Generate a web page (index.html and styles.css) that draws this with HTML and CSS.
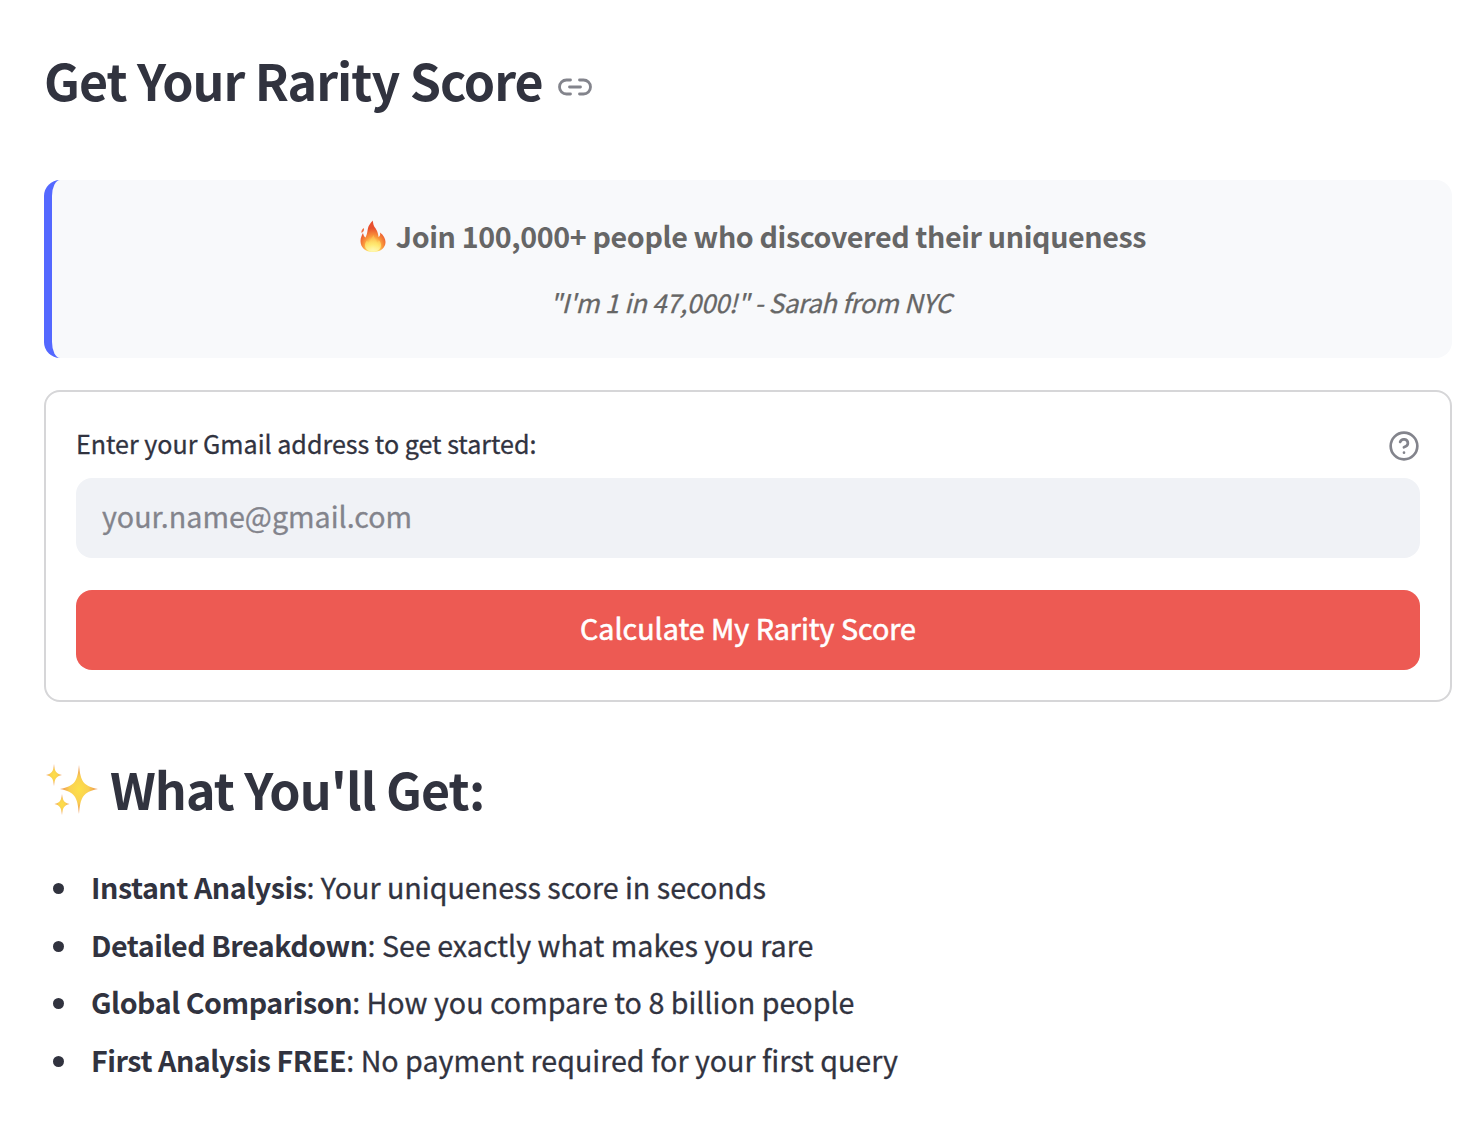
FILE: index.html
```html
<!DOCTYPE html>
<html lang="en">
<head>
  <meta charset="UTF-8" />
  <meta name="viewport" content="width=device-width, initial-scale=1.0" />
  <title>Get Your Rarity Score</title>
  <link rel="stylesheet" href="styles.css">
</head>
<body>
  <main class="container">
    <h1 class="page-title">
      <span>Get Your Rarity Score</span>
      <svg class="link-icon" viewBox="0 0 34 18" fill="none" stroke="currentColor" stroke-width="2.800" stroke-linecap="round">
        <path d="M12.500 2H8.500a7 7 0 0 0 0 14h4M21.500 2h4a7 7 0 0 1 0 14h-4M11.500 9h11" />
      </svg>
    </h1>

    <div class="social-proof">
      <p class="headline">
        <svg class="fire" viewBox="0 0 26 32">
          <defs>
            <radialGradient id="flame" cx="50%" cy="88%" r="75%">
              <stop offset="0" stop-color="#fffbb0" />
              <stop offset="0.28" stop-color="#ffe568" />
              <stop offset="0.5" stop-color="#fb9a3c" />
              <stop offset="0.85" stop-color="#e8502f" />
            </radialGradient>
            <linearGradient id="core" x1="0" y1="0" x2="0" y2="1">
              <stop offset="0" stop-color="#fcb04a" />
              <stop offset="0.6" stop-color="#ffe96e" />
              <stop offset="1" stop-color="#fffbc0" />
            </linearGradient>
          </defs>
          <path fill="url(#flame)" d="M13 32C5.500 32 .5 27.500.5 21c0-3.500 1.500-6 2.500-8 .5 2 1 3.500 2.500 4.500C8 13 7 9 9 5.500 10.200 3.200 12 1.800 12.500.5c.8 1.500.5 3.500 1.500 5.500 1.200 2.500 4 4.500 4.500 11 1.500-.8 2-2.500 1.500-4.500 3.500 2.500 5.500 6 5.500 9.500 0 6-5 10-12.500 10z" />
          <path fill="#ee7147" d="M3.800 8c.8 2-.4 4-2.200 5-.6-2 .4-4 2.200-5z" />
          <path fill="url(#core)" opacity=".75" d="M13 31.500c-5 0-8-2.500-8-6.500 0-2 1-3 2-4.500.8 1.500 1.500 2 2.500 2.500C10 20 12 18 13.500 15c1 3 2.500 5 3 8 1.200-.5 2-1.500 2.300-3 1.500 2 2.200 3.200 2.200 5 0 4-3 6.500-8 6.500z" />
        </svg>
        <strong>Join 100,000+ people who discovered their uniqueness</strong>
      </p>
      <p class="quote"><em>"I'm 1 in 47,000!" - Sarah from NYC</em></p>
    </div>

    <form class="rarity-form">
      <div class="label-row">
        <label for="email">Enter your Gmail address to get started:</label>
        <svg class="help-icon" viewBox="0 0 24 24" fill="none" stroke="currentColor" stroke-width="2" stroke-linecap="round" stroke-linejoin="round">
          <circle cx="12" cy="12" r="10" />
          <path d="M9.090 9a3 3 0 0 1 5.830 1c0 2-3 3-3 3" />
          <path d="M12 17h.01" />
        </svg>
      </div>
      <input type="text" id="email" placeholder="your.name@gmail.com" />
      <button type="button">Calculate My Rarity Score</button>
    </form>

    <h2 class="section-title">
      <svg class="sparkles" viewBox="0 0 54 54">
        <defs>
          <radialGradient id="spark">
            <stop offset="0" stop-color="#fde047" />
            <stop offset="0.5" stop-color="#fad052" />
            <stop offset="1" stop-color="#e98a50" />
          </radialGradient>
        </defs>
        <path fill="url(#spark)" d="M34 2c1.500 16 4 21 19 24-15 3-17.500 8-19 25-1.500-17-4-22-19-25 15-3 17.500-8 19-24z" />
        <path fill="url(#spark)" d="M9 1c.8 7.500 2 9.500 8 11-6 1.500-7.200 3.500-8 11-.8-7.500-2-9.500-8-11 6-1.500 7.200-3.500 8-11z" />
        <path fill="url(#spark)" d="M17 31c.8 6.500 2 8.500 7.500 10-5.500 1.500-6.700 3.500-7.500 11-.8-7.500-2-9.500-7.500-11 5.500-1.500 6.700-3.500 7.500-10z" />
      </svg>
      <span>What You'll Get:</span>
    </h2>

    <ul class="features">
      <li><strong>Instant Analysis</strong>: Your uniqueness score in seconds</li>
      <li><strong>Detailed Breakdown</strong>: See exactly what makes you rare</li>
      <li><strong>Global Comparison</strong>: How you compare to 8 billion people</li>
      <li><strong>First Analysis FREE</strong>: No payment required for your first query</li>
    </ul>
  </main>
</body>
</html>
```
FILE: styles.css
```css
* {
  box-sizing: border-box;
}
body {
  margin: 0;
  font-family: "Noto Sans CJK SC", sans-serif;
  font-size: 28.65px;
  background-color: #fff;
  color: #31333f;
  -webkit-text-stroke: 0.3px;
}
.container {
  padding: 45px 32px 0 44px;
}
h1, h2, p, ul {
  margin: 0;
}
.page-title,
.section-title {
  display: flex;
  align-items: center;
  height: 68px;
  font-size: 50.1px;
  font-weight: 600;
  line-height: 68px;
  letter-spacing: -0.97px;
  -webkit-text-stroke: 0;
}
.link-icon {
  width: 34px;
  height: 18px;
  margin: 15px 0 0 15px;
  color: #83848c;
}
.social-proof {
  height: 178px;
  margin-top: 67px;
  padding: 32px 0 0 2px;
  border-left: 8px solid #5468ff;
  border-radius: 16px;
  background-color: #f8f9fb;
  color: #666;
  text-align: center;
}
.headline {
  display: flex;
  justify-content: center;
  align-items: center;
  line-height: 48px;
  letter-spacing: -0.37px;
  -webkit-text-stroke: 0;
}
.fire {
  width: 26px;
  height: 32px;
  margin-right: 10px;
}
.quote {
  margin-top: 20px;
  padding-right: 5px;
  font-size: 25.8px;
  line-height: 44px;
  letter-spacing: -0.29px;
}
.rarity-form {
  height: 312px;
  margin-top: 32px;
  padding: 30px;
  border: 2px solid #d6d6d8;
  border-radius: 16px;
}
.label-row {
  display: flex;
  justify-content: space-between;
  align-items: center;
  height: 42px;
  font-size: 25.07px;
  line-height: 42px;
}
.help-icon {
  width: 32px;
  height: 32px;
  margin-top: 6px;
  color: #83848c;
}
.rarity-form input {
  display: block;
  width: 100%;
  height: 80px;
  margin-top: 14px;
  padding: 0 26px 5px;
  border: none;
  border-radius: 16px;
  background-color: #f0f2f6;
  font: inherit;
}
.rarity-form input::placeholder {
  color: #83848c;
}
.rarity-form button {
  display: block;
  width: 100%;
  height: 80px;
  margin-top: 32px;
  padding: 0 0 5px;
  border: none;
  border-radius: 16px;
  background-color: #ed5a53;
  color: #fff;
  font: inherit;
  -webkit-text-stroke: 0.6px;
}
.section-title {
  margin-top: 52px;
}
.sparkles {
  width: 54px;
  height: 54px;
  margin: 4px 11px 0 1px;
}
.features {
  margin-top: 36px;
  padding-left: 9px;
  line-height: 57.6px;
  list-style: none;
}
.features li::before {
  content: "";
  display: inline-block;
  width: 11px;
  height: 11px;
  margin-right: 27px;
  border-radius: 50%;
  background-color: #31333f;
  vertical-align: 5px;
}
.features strong {
  font-weight: 600;
  letter-spacing: -0.46px;
  -webkit-text-stroke: 0;
}
```
